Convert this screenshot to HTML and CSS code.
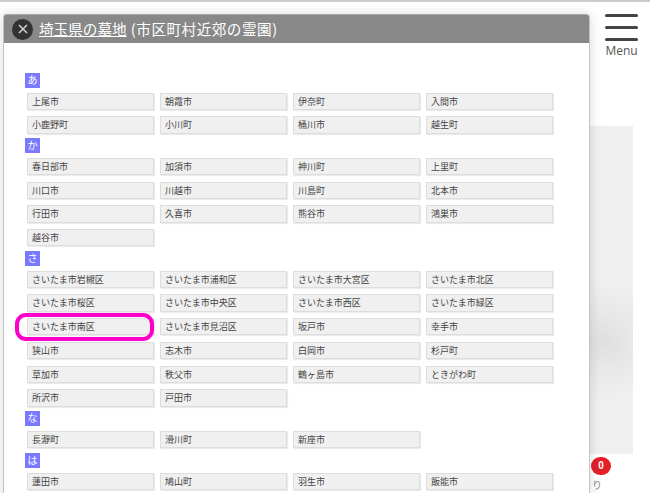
FILE: index.html
```html
<!DOCTYPE html>
<html lang="ja">
<head>
    <meta charset="utf-8">
    <title>埼玉県の墓地</title>
    <link rel="stylesheet" href="styles.css">
</head>
<body>
    <div class="page">
        <div class="side-panel"></div>
        <div class="menu">
            <span class="menu-bar"></span>
            <span class="menu-bar"></span>
            <span class="menu-bar"></span>
            <span class="menu-label">Menu</span>
        </div>
        <div class="badge">0</div>
        <div class="behind-text">り</div>

        <div class="modal">
            <div class="modal-head">
                <span class="close">
                    <svg width="10" height="10" viewBox="0 0 10 10"><path d="M1 1L9 9M9 1L1 9" stroke="#ccc" stroke-width="1.6" fill="none"/></svg>
                </span>
                <h2 class="modal-title"><a href="#">埼玉県の墓地</a> <span class="title-sub">(市区町村近郊の霊園)</span></h2>
            </div>
            <div class="modal-body">
                <div class="kana">あ</div>
                <ul class="cities">
                    <li>上尾市</li><li>朝霞市</li><li>伊奈町</li><li>入間市</li>
                    <li>小鹿野町</li><li>小川町</li><li>桶川市</li><li>越生町</li>
                </ul>
                <div class="kana">か</div>
                <ul class="cities">
                    <li>春日部市</li><li>加須市</li><li>神川町</li><li>上里町</li>
                    <li>川口市</li><li>川越市</li><li>川島町</li><li>北本市</li>
                    <li>行田市</li><li>久喜市</li><li>熊谷市</li><li>鴻巣市</li>
                    <li>越谷市</li>
                </ul>
                <div class="kana">さ</div>
                <ul class="cities">
                    <li>さいたま市岩槻区</li><li>さいたま市浦和区</li><li>さいたま市大宮区</li><li>さいたま市北区</li>
                    <li>さいたま市桜区</li><li>さいたま市中央区</li><li>さいたま市西区</li><li>さいたま市緑区</li>
                    <li class="marked">さいたま市南区</li><li>さいたま市見沼区</li><li>坂戸市</li><li>幸手市</li>
                    <li>狭山市</li><li>志木市</li><li>白岡市</li><li>杉戸町</li>
                    <li>草加市</li><li>秩父市</li><li>鶴ヶ島市</li><li>ときがわ町</li>
                    <li>所沢市</li><li>戸田市</li>
                </ul>
                <div class="kana">な</div>
                <ul class="cities">
                    <li>長瀞町</li><li>滑川町</li><li>新座市</li>
                </ul>
                <div class="kana">は</div>
                <ul class="cities">
                    <li>蓮田市</li><li>鳩山町</li><li>羽生市</li><li>飯能市</li>
                </ul>
            </div>
        </div>
    </div>
</body>
</html>
```

FILE: styles.css
```css
html, body {
    height: 100%;
    margin: 0;
    overflow: hidden;
    background: #fff;
    font-family: "Noto Sans CJK JP", "Noto Sans", sans-serif;
}

.page {
    position: relative;
    height: 493px;
    border-top: 2px solid #ccc;
    box-sizing: border-box;
    overflow: hidden;
}

.side-panel {
    position: absolute;
    left: 560px;
    top: 124px;
    width: 73px;
    height: 328px;
    background: radial-gradient(circle at 45px 215px, #dfdfdf 0, #e8e8e8 28px, #f0f0f0 60px);
}

.menu {
    position: absolute;
    left: 605px;
    top: 12px;
    width: 33px;
    display: flex;
    flex-direction: column;
    align-items: center;
}

.menu-bar {
    width: 33px;
    height: 3px;
    margin-bottom: 9px;
    border-radius: 2px;
    background: #444;
}

.menu-label {
    margin-top: -8px;
    font-size: 12px;
    line-height: 17px;
    color: #555;
    font-family: "Open Sans", sans-serif;
}

.badge {
    position: absolute;
    left: 591px;
    top: 455px;
    width: 20px;
    height: 18px;
    border-radius: 9px;
    background: #e3202a;
    color: #fff;
    font: bold 10px/18px "Liberation Sans", sans-serif;
    text-align: center;
}

.behind-text {
    position: absolute;
    left: 592px;
    top: 476px;
    font-size: 10px;
    line-height: 14px;
    color: #888;
}

.modal {
    position: absolute;
    left: 3px;
    top: 12px;
    width: 587px;
    height: 500px;
    box-sizing: border-box;
    background: #fff;
    border: 1px solid #c4c4c4;
    border-width: 0 1px 0 1px;
    border-radius: 3px 3px 0 0;
    box-shadow: 0 0 12px rgba(0, 0, 0, 0.15);
}

.modal-head {
    display: flex;
    align-items: center;
    gap: 6px;
    height: 29px;
    padding-left: 8px;
    background: #888;
    border-top: 1px solid #aaa;
    box-sizing: border-box;
    border-radius: 3px 3px 0 0;
}

.close {
    display: flex;
    align-items: center;
    justify-content: center;
    width: 21px;
    height: 21px;
    border-radius: 50%;
    background: #333;
}

.modal-title {
    margin: 0;
    font-size: 14.6px;
    font-weight: normal;
    line-height: 26px;
    color: #fff;
    white-space: nowrap;
}

.modal-title a {
    color: #fff;
}

.title-sub {
    margin-left: 1px;
    letter-spacing: 0.5px;
}

.modal-body {
    padding: 30px 0 0 21px;
}

.kana {
    width: 15px;
    height: 15px;
    background: #7a7aff;
    color: #fff;
    font-size: 10px;
    line-height: 14px;
    text-align: center;
}

.cities {
    display: grid;
    grid-template-columns: repeat(4, 127px);
    column-gap: 6px;
    row-gap: 6.4px;
    list-style: none;
    margin: 4.7px 0 4.7px 2px;
    padding: 0;
}

.cities li {
    position: relative;
    height: 17.3px;
    box-sizing: border-box;
    padding-left: 4px;
    background: #f0f0f0;
    border: 1px solid #ddd;
    box-shadow: 1px 1px 1px rgba(0, 0, 0, 0.08);
    color: #444;
    font-size: 9px;
    line-height: 15px;
    white-space: nowrap;
}

.marked::after {
    content: "";
    position: absolute;
    left: -13px;
    right: -1px;
    top: -6px;
    bottom: -7px;
    border: 4px solid #f0c;
    border-radius: 11px;
}
```
